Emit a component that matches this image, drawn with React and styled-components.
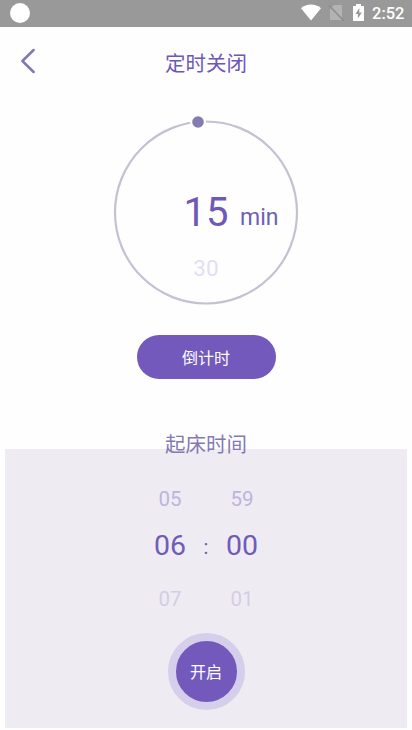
import React from "react";
import styled, { createGlobalStyle } from "styled-components";

const GlobalStyle = createGlobalStyle`
  * {
    box-sizing: border-box;
  }
  body {
    margin: 0;
    background: #fff;
    font-family: Roboto, "Noto Sans CJK SC", sans-serif;
  }
`;

const Screen = styled.div`
  display: flex;
  flex-direction: column;
  align-items: center;
  width: 412px;
  height: 730px;
  overflow: hidden;
  background: #fefefe;
`;

const StatusBar = styled.div`
  display: flex;
  align-items: center;
  justify-content: space-between;
  width: 100%;
  height: 27px;
  padding: 0 8px 2px 10px;
  background: #999;
`;

const StatusDot = styled.div`
  width: 20px;
  height: 20px;
  border-radius: 50%;
  background: #fff;
`;

const StatusIcons = styled.div`
  display: flex;
  align-items: center;
  height: 25px;
`;

const Clock = styled.span`
  width: 32px;
  margin-left: 8px;
  padding-top: 2px;
  color: #fff;
  font-size: 16.5px;
  font-weight: 500;
  line-height: 25px;
`;

const Header = styled.div`
  display: grid;
  grid-template-columns: 60px 1fr 60px;
  align-items: center;
  width: 100%;
  height: 70px;
`;

const BackButton = styled.button`
  display: flex;
  padding: 0 0 2px 20px;
  border: 0;
  background: none;
`;

const Title = styled.h1`
  margin: 0;
  padding-top: 3px;
  color: ${props => props.color};
  font-size: 20.5px;
  font-weight: 400;
  line-height: 30px;
  text-align: center;
`;

const Dial = styled.div`
  position: relative;
  width: 186px;
  height: 186px;
  margin-top: 22px;
`;

const Ring = styled.svg`
  position: absolute;
  top: 0;
  left: 0;
  overflow: visible;
`;

const DialValues = styled.div`
  position: relative;
  display: grid;
  grid-template-columns: 1fr 46px 1fr;
  grid-template-rows: 56px 56px;
  align-items: center;
  padding-top: 65px;
  text-align: center;
`;

const Minutes = styled.span`
  grid-column: 2;
  padding-top: 1px;
  color: #6f58b8;
  font-size: 40px;
  line-height: 56px;
`;

const Unit = styled.span`
  grid-column: 3;
  padding: 12px 0 0 11px;
  color: #6f5fb4;
  font-size: 23px;
  line-height: 42px;
  text-align: left;
`;

const NextMinutes = styled.span`
  grid-column: 2;
  color: #e2dff1;
  font-size: 22.5px;
`;

const CountdownButton = styled.button`
  width: 139px;
  height: 44px;
  margin-top: 30px;
  padding: 3px 0 0;
  border: 0;
  border-radius: 22px;
  background: #7259bb;
  color: #fff;
  font-family: inherit;
  font-size: 16px;
  line-height: 41px;
`;

const WakeSection = styled.div`
  display: flex;
  flex-direction: column;
  align-items: center;
  width: 402px;
  height: 279px;
  margin-top: 70px;
  background: #eeecf2;
`;

const WakeTitle = styled(Title).attrs({ as: "h2" })`
  margin-top: -22px;
`;

const TimePicker = styled.div`
  display: grid;
  grid-template-columns: 44px 28px 44px;
  grid-template-rows: 46px 50px 54px;
  align-items: center;
  margin-top: 15px;
  text-align: center;
`;

const TimeOption = styled.span`
  grid-column: ${props => props.$column};
  padding-top: 1px;
  color: ${props => (props.$faded ? "#d3cde5" : "#bdb4de")};
  font-size: 20.5px;
  line-height: 30px;
`;

const TimeSelected = styled.span`
  color: #705bb8;
  font-size: 28.5px;
  line-height: 40px;
`;

const Colon = styled.span`
  padding-top: 2px;
  color: #705bb8;
  font-size: 20px;
`;

const StartButton = styled.button`
  width: 77px;
  height: 77px;
  margin-top: 8px;
  padding: 0 0 2px;
  border: 8px solid #d6cfeb;
  border-radius: 50%;
  background: #7259bb;
  color: #fff;
  font-family: inherit;
  font-size: 16px;
`;

const WifiIcon = () => (
  <svg width="20" height="17" viewBox="0 0 20 17">
    <path d="M10 16.5 0 4.2C2.6 1.8 6.2.5 10 .5s7.4 1.3 10 3.7z" fill="#fff" />
  </svg>
);

const SlashedSim = styled.svg`
  margin-left: 7px;
`;

const NoSimIcon = () => (
  <SlashedSim width="16" height="17" viewBox="0 0 16 17">
    <path d="M6 1h8v15H2V5z" fill="#b3b3b3" />
    <path d="M1 1.5 15.5 16.5" stroke="#8c8c8c" strokeWidth="1.5" />
  </SlashedSim>
);

const Battery = styled.svg`
  margin-left: 9px;
`;

const BatteryIcon = () => (
  <Battery width="11" height="17" viewBox="0 0 11 17">
    <path d="M3 0h5v2h3v15H0V2h3z" fill="#fff" />
    <path d="M6.3 4 2.4 10h2.5v4.5L8.8 8.4H6.3z" fill="#999" />
  </Battery>
);

const App = () => (
  <>
    <GlobalStyle />
    <Screen>
      <StatusBar>
        <StatusDot />
        <StatusIcons>
          <WifiIcon />
          <NoSimIcon />
          <BatteryIcon />
          <Clock>2:52</Clock>
        </StatusIcons>
      </StatusBar>
      <Header>
        <BackButton>
          <svg width="16" height="26" viewBox="0 0 16 26" fill="none">
            <path
              d="M13.6 2 2.4 13l11.2 11"
              stroke="#8377b2"
              strokeWidth="2.5"
              strokeLinecap="round"
              strokeLinejoin="round"
            />
          </svg>
        </BackButton>
        <Title color="#6d58b5">定时关闭</Title>
      </Header>
      <Dial>
        <Ring width="186" height="186" viewBox="0 0 186 186">
          <circle
            cx="93"
            cy="93.5"
            r="91"
            fill="none"
            stroke="#c4c1d3"
            strokeWidth="2.2"
          />
          <circle cx="85" cy="3" r="8" fill="#fefefe" />
          <circle cx="85" cy="3" r="5.8" fill="#857bb0" />
        </Ring>
        <DialValues>
          <Minutes>15</Minutes>
          <Unit>min</Unit>
          <NextMinutes>30</NextMinutes>
        </DialValues>
      </Dial>
      <CountdownButton>倒计时</CountdownButton>
      <WakeSection>
        <WakeTitle color="#8579b3">起床时间</WakeTitle>
        <TimePicker>
          <TimeOption $column={1}>05</TimeOption>
          <TimeOption $column={3}>59</TimeOption>
          <TimeSelected>06</TimeSelected>
          <Colon>:</Colon>
          <TimeSelected>00</TimeSelected>
          <TimeOption $column={1} $faded>
            07
          </TimeOption>
          <TimeOption $column={3} $faded>
            01
          </TimeOption>
        </TimePicker>
        <StartButton>开启</StartButton>
      </WakeSection>
    </Screen>
  </>
);

export default App;
